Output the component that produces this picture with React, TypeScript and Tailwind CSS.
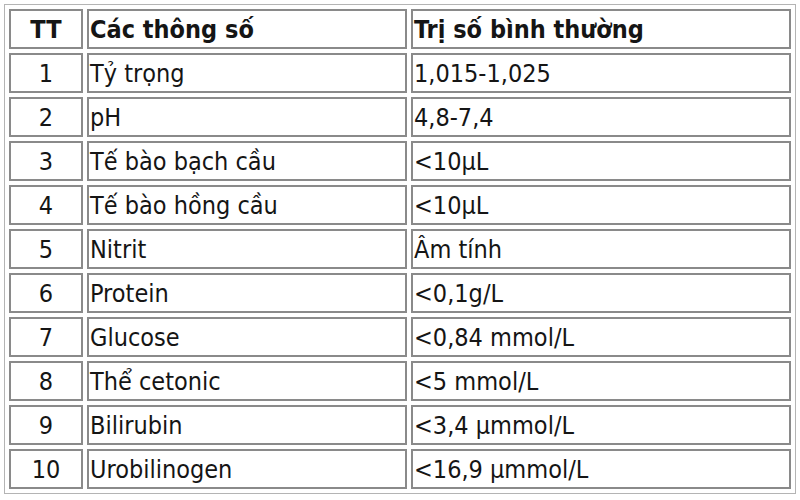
const rows: [string, string, string][] = [
  ["1", "Tỷ trọng", "1,015-1,025"],
  ["2", "pH", "4,8-7,4"],
  ["3", "Tế bào bạch cầu", "<10μL"],
  ["4", "Tế bào hồng cầu", "<10μL"],
  ["5", "Nitrit", "Âm tính"],
  ["6", "Protein", "<0,1g/L"],
  ["7", "Glucose", "<0,84 mmol/L"],
  ["8", "Thể cetonic", "<5 mmol/L"],
  ["9", "Bilirubin", "<3,4 μmmol/L"],
  ["10", "Urobilinogen", "<16,9 μmmol/L"],
];

export default function App() {
  return (
    <div className="w-[800px] h-[500px] bg-white pt-[4px] pl-[4px] font-['DejaVu_Sans_Condensed','DejaVu_Sans',sans-serif] text-[#151515]">
      <table className="border-separate border-spacing-[4px] border border-[#b4b4b4] w-[792px] table-fixed">
        <colgroup>
          <col className="w-[74px]" />
          <col className="w-[320px]" />
          <col className="w-[380px]" />
        </colgroup>
        <thead>
          <tr>
            <th className="h-[40px] border-2 border-[#8a8a8a] p-0 text-center text-[25px] font-bold leading-none">
              TT
            </th>
            <th className="h-[40px] border-2 border-[#8a8a8a] px-[1px] py-0 text-left text-[25px] font-bold leading-none">
              Các thông số
            </th>
            <th className="h-[40px] border-2 border-[#8a8a8a] px-[1px] py-0 text-left text-[25px] font-bold leading-none">
              Trị số bình thường
            </th>
          </tr>
        </thead>
        <tbody>
          {rows.map(([n, name, value]) => (
            <tr key={n}>
              <td className="h-[40px] border-2 border-[#8a8a8a] p-0 text-center text-[25px] leading-none">
                {n}
              </td>
              <td className="h-[40px] border-2 border-[#8a8a8a] px-[1px] py-0 text-[25px] leading-none">
                {name}
              </td>
              <td className="h-[40px] border-2 border-[#8a8a8a] px-[1px] py-0 text-[25px] leading-none">
                {value}
              </td>
            </tr>
          ))}
        </tbody>
      </table>
    </div>
  );
}
